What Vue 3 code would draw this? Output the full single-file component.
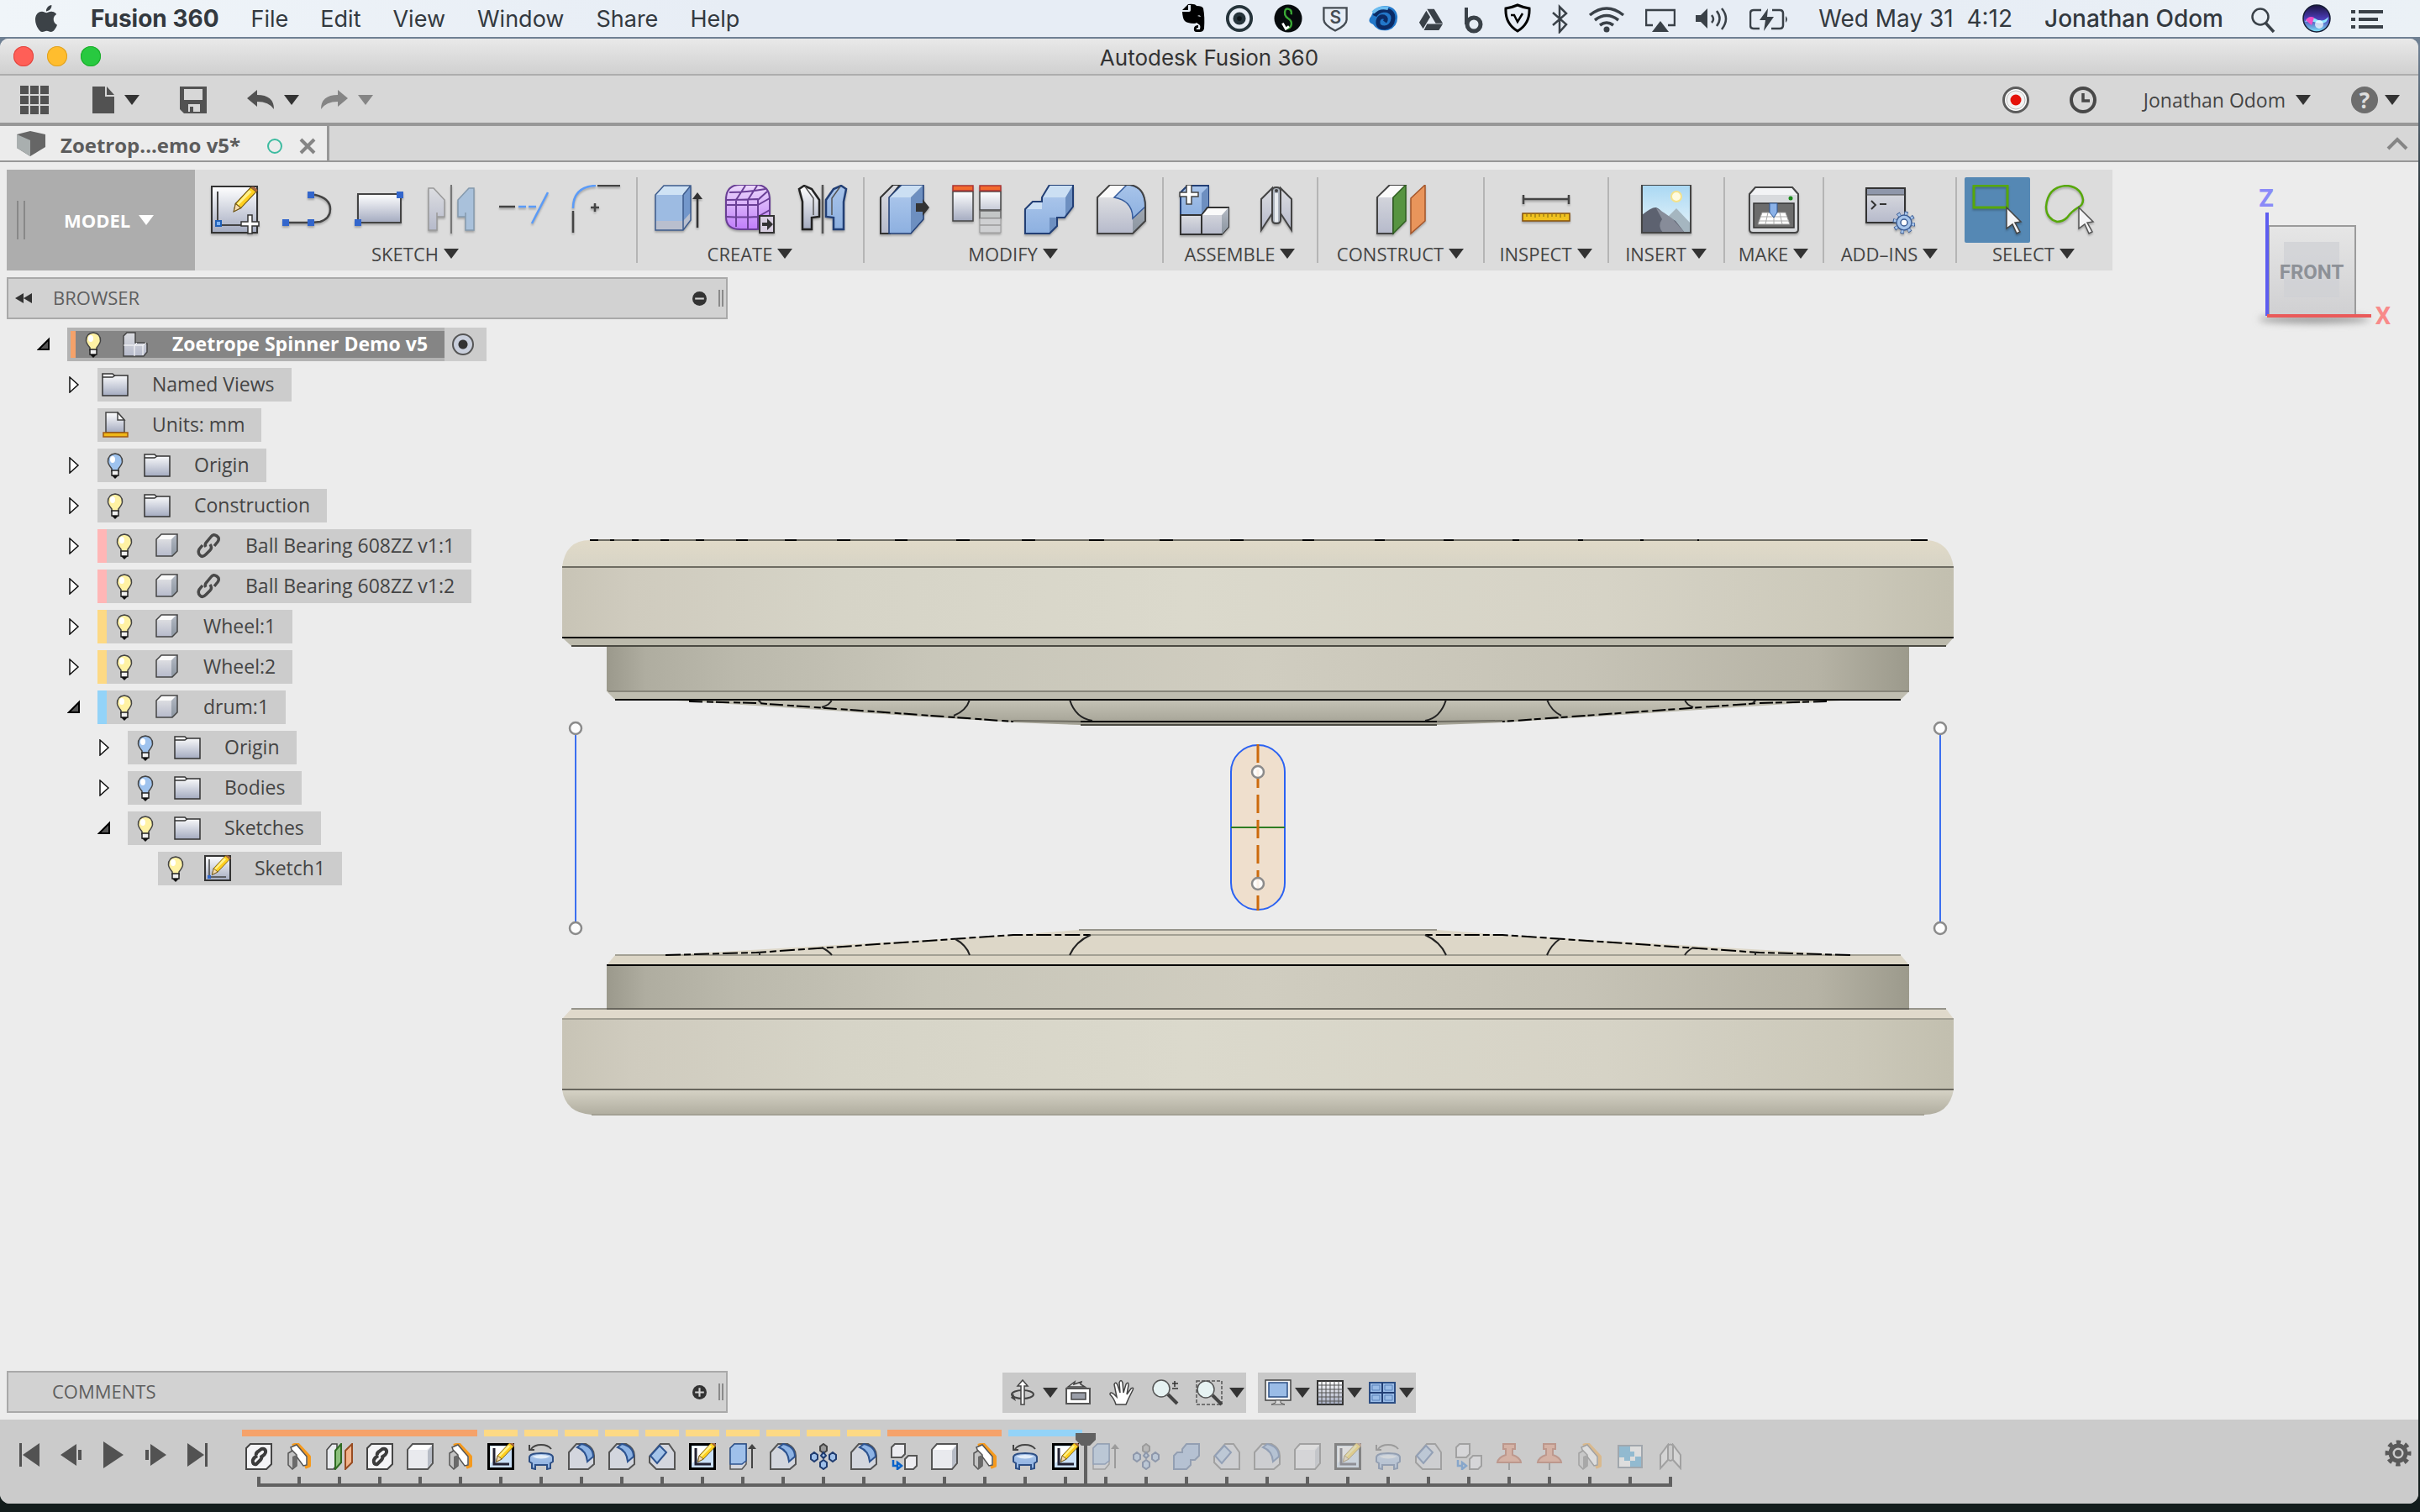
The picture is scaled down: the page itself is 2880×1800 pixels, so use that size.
<template>
  <div class="desktop">
    <!-- shared icon shapes -->
    <svg class="sprite" aria-hidden="true">
      <defs>
        <linearGradient id="grey" x1="0" y1="0" x2="0" y2="1">
          <stop offset="0" stop-color="#ffffff" />
          <stop offset="1" stop-color="#a4abc0" />
        </linearGradient>
        <linearGradient id="face" x1="0" y1="0" x2="0" y2="1">
          <stop offset="0" stop-color="#dcdde1" />
          <stop offset="1" stop-color="#b6bacb" />
        </linearGradient>
        <linearGradient id="side" x1="0" y1="0" x2="0" y2="1">
          <stop offset="0" stop-color="#b4bac4" />
          <stop offset="1" stop-color="#8a949f" />
        </linearGradient>
        <linearGradient id="blue" x1="0" y1="0" x2="0" y2="1">
          <stop offset="0" stop-color="#a8c4ea" />
          <stop offset="1" stop-color="#8db0e0" />
        </linearGradient>
        <linearGradient id="sky" x1="0" y1="0" x2="0" y2="1">
          <stop offset="0" stop-color="#a9d8f3" />
          <stop offset="1" stop-color="#e8f4fa" />
        </linearGradient>
        <linearGradient id="purple" x1="0" y1="0" x2="0" y2="1">
          <stop offset="0" stop-color="#ecd9fb" />
          <stop offset="1" stop-color="#c07dfa" />
        </linearGradient>
        <linearGradient id="siri" x1="0" y1="0" x2="0" y2="1">
          <stop offset="0" stop-color="#1b1440" />
          <stop offset="0.5" stop-color="#4a3bb5" />
          <stop offset="1" stop-color="#7de4f7" />
        </linearGradient>
      </defs>

      <symbol id="caret" viewBox="0 0 18 12"><path d="M0 0H18L9 12z" fill="currentColor" /></symbol>

      <!-- menu bar -->
      <symbol id="apple" viewBox="2 0 20 24">
        <path fill="#3c4247" d="M12.152 6.896c-.948 0-2.415-1.078-3.96-1.04-2.04.027-3.91 1.183-4.961 3.014-2.117 3.675-.546 9.103 1.519 12.09 1.013 1.454 2.208 3.09 3.792 3.039 1.52-.065 2.09-.987 3.935-.987 1.831 0 2.35.987 3.96.948 1.637-.026 2.676-1.48 3.676-2.948 1.156-1.688 1.636-3.325 1.662-3.415-.039-.013-3.182-1.221-3.22-4.857-.026-3.04 2.48-4.494 2.597-4.559-1.429-2.09-3.623-2.324-4.39-2.376-2-.156-3.675 1.09-4.61 1.09zM15.53 3.83c.843-1.012 1.4-2.427 1.245-3.83-1.207.052-2.662.805-3.532 1.818-.78.896-1.454 2.338-1.273 3.714 1.338.104 2.715-.688 3.559-1.701" />
      </symbol>
      <symbol id="evernote" viewBox="0 0 28 36">
        <path fill="#000" d="M8 2v6H1L8 1q8-1 10 2 7 0 8 3 2 10 1 24-1 4-5 4h-4q-4 0-3-5 1-3 5-3v3q-3 0-2 2h4q1-3 0-5l-4-3q-1 1-3 1-4 0-7-1-5-1-6-6-1-4-1-7h8q2 0 2-2V2z" />
        <path d="M19 15q3-2 4 1z" fill="#e9eff5" />
      </symbol>
      <symbol id="target" viewBox="0 0 36 36">
        <circle cx="18" cy="18" r="15" fill="none" stroke="#26343b" stroke-width="4" />
        <circle cx="18" cy="18" r="8" fill="#26343b" />
        <circle cx="18" cy="18" r="3" fill="#0d1418" />
      </symbol>
      <symbol id="snagit" viewBox="0 0 36 36">
        <circle cx="18" cy="18" r="17.500" fill="#060a0c" />
        <path d="M22 13q1-6-4-7t-4 7q1 3 4 5 5 3 4 8t-7 5" fill="none" stroke="#3aa935" stroke-width="2.500" />
        <path d="M11 24l4 7 4-3" fill="none" stroke="#fff" stroke-width="3" />
      </symbol>
      <symbol id="shield-s" viewBox="0 0 32 36">
        <path d="M1.500 4.500h29v15q0 7-14.500 14Q1.500 26 1.500 19.500z" fill="none" stroke="#454c53" stroke-width="2.500" />
      </symbol>
      <symbol id="swirl" viewBox="0 0 36 36">
        <path d="M4 15q3-11 15-12 14 0 16 12 1 13-11 17-12 2-18-7-8-3-2-10z" fill="#2277c9" />
        <path d="M8 15q3-6 11-7 11 0 11 10-1 10-10 11-9 0-8-8 1-6 7-5 4 2 1 6" fill="none" stroke="#0b2b66" stroke-width="5" />
        <path d="M6 11q7-8 18-5" fill="none" stroke="#6bbcf0" stroke-width="4" />
      </symbol>
      <symbol id="drive" viewBox="0 0 32 36">
        <path d="M11 6h9l11 18h-9zM10 8l5 8L6 31l-5-8zM11 25h20l-5 8H7z" fill="#3a4148" />
      </symbol>
      <symbol id="beats" viewBox="0 0 24 36">
        <path d="M3 5v20" stroke="#3a4148" stroke-width="4" />
        <circle cx="12" cy="25" r="8" fill="none" stroke="#3a4148" stroke-width="5" />
      </symbol>
      <symbol id="shield-v" viewBox="0 0 32 36">
        <path d="M16 2q7 3 14 4 1 18-14 27Q1 24 2 6q7-1 14-4z" fill="none" stroke="#000" stroke-width="3" />
        <path d="M8 14h4l4 8 6-10" fill="none" stroke="#000" stroke-width="2.500" />
      </symbol>
      <symbol id="bluetooth" viewBox="0 0 20 36">
        <path d="M2 11l16 14-8 9V4l8 8L2 26" fill="none" stroke="#3a4148" stroke-width="2.500" />
      </symbol>
      <symbol id="wifi" viewBox="0 0 44 36">
        <path d="M2 14q20-16 40 0M8 20q14-11 28 0M14 26q8-6 16 0" fill="none" stroke="#3a4148" stroke-width="3.500" />
        <circle cx="22" cy="31" r="3.500" fill="#3a4148" />
      </symbol>
      <symbol id="airplay" viewBox="0 0 36 36">
        <path d="M9 26H1V8h34v18h-8" fill="none" stroke="#3a4148" stroke-width="2.500" />
        <path d="M18 21l10 13H8z" fill="#3a4148" />
      </symbol>
      <symbol id="volume" viewBox="0 0 40 36">
        <path d="M0 14h6l8-8v24l-8-8H0z" fill="#3a4148" />
        <path d="M19 14q4 5 0 9M25 9q7 9 0 18M31 6q10 12 0 25" fill="none" stroke="#3a4148" stroke-width="2.500" />
      </symbol>
      <symbol id="battery" viewBox="0 0 46 36">
        <path d="M14 8H5q-4 0-4 4v14q0 4 4 4h7M27 8h9q4 0 4 4v14q0 4-4 4H26" fill="none" stroke="#3a4148" stroke-width="2.500" />
        <path d="M22 6l-10 14h7l-2 13 12-17h-8z" fill="#3a4148" />
        <path d="M43 15q4 4 0 8z" fill="#3a4148" />
      </symbol>
      <symbol id="search" viewBox="0 0 30 36">
        <circle cx="12" cy="16" r="9.500" fill="none" stroke="#3a4148" stroke-width="2.500" />
        <path d="M18 23l10 11" stroke="#3a4148" stroke-width="3.500" />
      </symbol>
      <symbol id="siri-orb" viewBox="0 0 34 36">
        <circle cx="17" cy="18" r="16" fill="url(#siri)" stroke="#141b33" stroke-width="1.500" />
        <path d="M3 22q5-8 12-4 9 6 16-2-1 10-14 7-8-3-14-1z" fill="#8fe9ff" />
        <path d="M4 20q4-6 10-3l-3 9z" fill="#f04fc5" />
        <circle cx="20" cy="25" r="5" fill="#fff" opacity="0.700" />
      </symbol>
      <symbol id="list" viewBox="0 0 38 36">
        <path d="M0 10h5M9 10h29M0 19h5M9 19h23M0 28h5M9 28h29" stroke="#3a4148" stroke-width="4" />
      </symbol>

      <!-- quick access bar -->
      <symbol id="grid9" viewBox="0 0 34 34">
        <path fill="#525252" d="M0 0h10v10H0zM12 0h10v10H12zM24 0h10v10H24zM0 12h10v10H0zM12 12h10v10H12zM24 12h10v10H24zM0 24h10v10H0zM12 24h10v10H12zM24 24h10v10H24z" />
      </symbol>
      <symbol id="file" viewBox="0 0 26 32"><path fill="#525252" d="M0 0h15v12h11v20H0zM17 0l9 10h-9z" /></symbol>
      <symbol id="save" viewBox="0 0 32 32">
        <path fill="#525252" fill-rule="evenodd" d="M0 0h32v32H5l-5-5zM5 3v13h22V3zM10 21v9h14v-9z" />
        <path fill="#525252" d="M12 24h4v6h-4z" />
      </symbol>
      <symbol id="undo" viewBox="0 0 32 24">
        <path fill="currentColor" d="M0 10L12 0v6q20 0 20 17-6-9-20-9v6z" />
      </symbol>
      <symbol id="redo" viewBox="0 0 32 24">
        <path fill="currentColor" d="M32 10L20 0v6Q0 6 0 23q6-9 20-9v6z" />
      </symbol>
      <symbol id="record" viewBox="0 0 32 32">
        <circle cx="16" cy="16" r="14.500" fill="#fff" stroke="#5c5c5c" stroke-width="3" />
        <circle cx="16" cy="16" r="11" fill="#f2f2f2" stroke="#bbb" />
        <circle cx="16" cy="16" r="6.500" fill="#e5120a" />
      </symbol>
      <symbol id="clock" viewBox="0 0 32 32">
        <circle cx="16" cy="16" r="14" fill="none" stroke="#484848" stroke-width="4" />
        <path d="M16 8v9h8" fill="none" stroke="#484848" stroke-width="3.500" />
      </symbol>
      <symbol id="cube-tab" viewBox="0 0 34 30">
        <path d="M0 4L16 0l18 4v15L16 30 0 20z" fill="#666" />
        <path d="M0 4l16 7v19L0 20z" fill="#a9afaf" />
      </symbol>

      <!-- ribbon -->
      <symbol id="pencil" viewBox="0 0 30 30">
        <path d="M22 1l6 5L11 24l-8 4 2-9z" fill="#ffcf1f" stroke="#6d5313" />
        <path d="M20 4l3 2L8 21l-2-1z" fill="#fff18a" />
        <path d="M5 19l6 5-8 4z" fill="#f6dcae" stroke="#6d5313" />
        <path d="M22 1q3-2 6 1t0 4z" fill="#a5673f" />
      </symbol>
      <symbol id="r-sketch" viewBox="0 0 60 60">
        <path d="M3 2h54v55H3z" fill="url(#grey)" stroke="#333" stroke-width="2" />
        <path d="M10 8v40h28" fill="none" stroke="#444" stroke-width="2" />
        <path d="M8 43h6v6H8z" fill="#7db3f5" stroke="#2060b8" stroke-width="2" />
        <use href="#pencil" x="26" y="2" width="32" height="32" />
        <path d="M46 36h5v8h8v5h-8v9h-5v-9h-8v-5h8z" fill="#fff" stroke="#333" stroke-width="1.500" />
      </symbol>
      <symbol id="r-line" viewBox="0 0 60 60">
        <path d="M5 45h28M34 12h6q18 4 18 17 0 11-12 15l-10 1" fill="none" stroke="#444" stroke-width="2.500" />
        <path d="M1 41h8v8H1zM31 41h8v8h-8zM31 8h8v8h-8z" fill="#3366cc" />
      </symbol>
      <symbol id="r-rect" viewBox="0 0 60 60">
        <path d="M5 11h51v34H5z" fill="url(#grey)" stroke="#444" stroke-width="2" />
        <path d="M1 41h8v8H1zM51 8h8v8h-8z" fill="#3366cc" />
      </symbol>
      <symbol id="r-mirror" viewBox="0 0 60 60">
        <path d="M30 0v58" stroke="#777" stroke-width="2" />
        <path d="M3 4h6l13 14v20h-9v-5 21H3z" fill="url(#face)" stroke="#999" stroke-width="1.500" />
        <path d="M57 4h-6L38 18v20h9v-5 21h10z" fill="#a9c1db" stroke="#8499ad" stroke-width="1.500" />
      </symbol>
      <symbol id="r-trim" viewBox="0 0 60 60">
        <path d="M1 26h19" stroke="#444" stroke-width="2.500" />
        <path d="M24 26h9M36 26h9M59 9L40 46" stroke="#5b9bf7" stroke-width="2.500" />
      </symbol>
      <symbol id="r-fillet" viewBox="0 0 60 60">
        <path d="M3 28Q3 2 30 1" fill="none" stroke="#5b9bf7" stroke-width="2.500" />
        <path d="M32 1h27M3 31v26M24 27h10M29 22v10" stroke="#444" stroke-width="2.500" />
      </symbol>
      <symbol id="r-extrude" viewBox="0 0 60 60">
        <path d="M3 12L13 1h32v40l-9 13H3z" fill="#7397cb" />
        <path d="M3 12L13 1h32l-9 11z" fill="#cfe2f4" />
        <path d="M3 12h33v31H3z" fill="#9dbbe2" />
        <path d="M3 43h33v11H3zM36 54V43l9-10v9z" fill="#b9bfce" />
        <path d="M3 12L13 1h32v41l-9 12H3zM36 12v42M36 12l9-11" fill="none" stroke="#3d5b8c" stroke-width="1.500" />
        <path d="M53 51V14" stroke="#333" stroke-width="2.500" />
        <path d="M53 9l6 8H47z" fill="#333" />
      </symbol>
      <symbol id="r-form" viewBox="0 0 60 60">
        <path d="M1 18Q1 0 18 0h18q17 0 17 18v18q0 17-17 17H18Q1 53 1 38z" fill="url(#purple)" stroke="#6a3f96" stroke-width="2" />
        <path d="M1 24q20 0 38 0M1 38q20 1 38 0M13 50V18L24 1M27 53V18L38 1M39 53V18L50 8M1 18q18 0 38-1M5 9q20 0 43-4M39 38l14-8M39 24l14-8" fill="none" stroke="#6a3f96" stroke-width="2" />
        <path d="M41 37h17v20H41z" fill="#d8cfe0" stroke="#333" stroke-width="2" />
        <path d="M44 45h6v-5l7 7-7 7v-5h-6z" fill="#333" />
      </symbol>
      <symbol id="r-split" viewBox="0 0 60 60">
        <path d="M30 0v58" stroke="#555" stroke-width="2.500" />
        <path d="M2 5l6-4 9 4 9 13v20l-9 1v14H6V20z" fill="url(#grey)" stroke="#222" stroke-width="2.500" />
        <path d="M58 5l-6-4-9 4-9 13v20l9 1v14h12V20z" fill="url(#blue)" stroke="#223f75" stroke-width="2.500" />
        <path d="M9 2l10 14v20M51 2L41 16v20" fill="none" stroke="#555" stroke-width="1.500" />
      </symbol>
      <symbol id="r-press" viewBox="0 0 60 60">
        <path d="M1 15L16 0h8L12 15v43H1z" fill="url(#face)" stroke="#333" stroke-width="2" />
        <path d="M11 15h26v43H11z" fill="url(#blue)" />
        <path d="M11 15L26 0h26L37 15z" fill="#cbdff3" />
        <path d="M37 15L52 0v41L37 58z" fill="#6d8fc0" />
        <path d="M11 15L26 0h26v41L37 58H11z" fill="none" stroke="#223f75" stroke-width="1.500" />
        <path d="M43 22h8v-5l8 10-8 10v-5h-8z" fill="#333" />
      </symbol>
      <symbol id="r-fillpat" viewBox="0 0 60 60">
        <path d="M1 8h24v35H1zM33 8h25v22H33z" fill="url(#grey)" stroke="#444" stroke-width="1.500" />
        <path d="M33 31h25v9H33z" fill="#c3c6c6" stroke="#666" stroke-width="1.500" />
        <path d="M33 40h25v8H33zM33 48h25v9H33z" fill="#cfd0d2" stroke="#999" />
        <path d="M1 1h24v6H1zM33 1h25v6H33z" fill="#f26a2e" stroke="#a33" stroke-width="1.500" />
      </symbol>
      <symbol id="r-combine" viewBox="0 0 60 60">
        <path d="M1 29l9-9h11V15L30 0h28v26L48 39h-9v10l-9 9H1z" fill="#6d8fc0" />
        <path d="M1 29h20V15h28v24H30v19H1z" fill="url(#blue)" />
        <path d="M1 29l9-9h11v9zM21 15L30 0h28l-9 15z" fill="#cbdff3" />
        <path d="M1 29l9-9h11V15L30 0h28v26L48 39h-9v10l-9 9H1z" fill="none" stroke="#223f75" stroke-width="2" />
      </symbol>
      <symbol id="r-round" viewBox="0 0 60 60">
        <path d="M1 15L16 0h24q18 3 18 26v17L43 58H1z" fill="url(#side)" />
        <path d="M1 15h20q22 2 22 26v17H1z" fill="url(#face)" />
        <path d="M1 15L16 0h20L21 15z" fill="#fafafa" />
        <path d="M21 15L36 0q22 1 22 26L43 40q0-21-22-25z" fill="url(#blue)" stroke="#355b9b" stroke-width="1.500" />
        <path d="M1 15L16 0h24q18 3 18 26v17L43 58H1z" fill="none" stroke="#444" stroke-width="2" />
      </symbol>
      <symbol id="r-component" viewBox="0 0 60 60">
        <path d="M2 9l8-8h25v26L27 36H2z" fill="url(#blue)" stroke="#223f75" stroke-width="2" />
        <path d="M27 35V10l8-8v26z" fill="#6d8fc0" />
        <path d="M2 36h25v23H2z" fill="url(#face)" stroke="#333" stroke-width="2" />
        <path d="M27 36l7-9h25v23l-8 9H27z" fill="url(#face)" stroke="#333" stroke-width="2" />
        <path d="M51 36l8-9v23l-8 9z" fill="url(#side)" />
        <path d="M28 36l7-8h23l-7 8z" fill="#fafafa" />
        <path d="M9 0h6v9h8v5h-8v9H9v-9H1V9h8z" fill="#fff" stroke="#444" stroke-width="1.500" />
      </symbol>
      <symbol id="r-joint" viewBox="0 0 60 60">
        <path d="M12 17L25 4v30L12 54zM48 17L35 4v30l13 20z" fill="url(#face)" stroke="#444" stroke-width="2" />
        <path d="M25 7q0-4 5-4t5 4v35q0 4-5 4t-5-4z" fill="#aeb5bf" stroke="#444" stroke-width="2" />
        <path d="M28 10h4v34h-4z" fill="#e9ecef" />
        <circle cx="30" cy="7" r="2" fill="#444" />
      </symbol>
      <symbol id="r-plane" viewBox="0 0 60 60">
        <path d="M2 15L17 0h19L21 15v43H2z" fill="url(#face)" stroke="#444" stroke-width="2" />
        <path d="M3 15L18 1h17L21 15z" fill="#fafafa" />
        <path d="M21 15L36 0v43L21 58z" fill="#579441" stroke="#2f5f20" stroke-width="1.500" />
        <path d="M42 16L59 0v43L42 58z" fill="#e9955b" stroke="#a4552a" stroke-width="1.500" />
      </symbol>
      <symbol id="r-measure" viewBox="0 0 60 60">
        <path d="M3 12v11M57 12v11M3 17h54" stroke="#444" stroke-width="2.500" />
        <path d="M2 34h56v9H2z" fill="#f0c21f" stroke="#85500d" stroke-width="1.500" />
        <path d="M7 35v3M12 35v3M17 35v4M22 35v3M27 35v3M32 35v4M37 35v3M42 35v3M47 35v4M52 35v3" stroke="#7d6410" />
      </symbol>
      <symbol id="r-image" viewBox="0 0 60 60">
        <path d="M1 0h58v57H1z" fill="url(#sky)" />
        <circle cx="42" cy="14" r="6" fill="#fffbe0" stroke="#f5e28a" stroke-width="2" />
        <path d="M30 40l12-12 17 18v11H30z" fill="#a5b6c0" />
        <path d="M1 36q12-10 17-9 5 2 9 8l14 8 11 14H1z" fill="#5d6270" />
        <path d="M18 28q5 9 7 13-6 8 1 16h26L37 40 27 33z" fill="#878c99" />
        <path d="M1 0h58v57H1z" fill="none" stroke="#444" stroke-width="2" />
      </symbol>
      <symbol id="r-print" viewBox="0 0 60 60">
        <path d="M8 3h44l7 8v42q0 4-4 4H5q-4 0-4-4V11z" fill="#d8dadd" stroke="#444" stroke-width="2" />
        <path d="M9 4h42l7 8H2z" fill="#f2f3f5" />
        <path d="M6 22h48v29H6z" fill="#6c6c6c" stroke="#333" stroke-width="1.500" />
        <path d="M16 33h28l5 14H11z" fill="#fff" stroke="#999" />
        <path d="M14 38h32M12 43h36M23 33l-3 14M30 33v14M37 33l3 14" stroke="#aaa" />
        <path d="M25 22h9v11l-4 6-5-6z" fill="#8bb2e8" stroke="#2f5792" />
        <circle cx="50" cy="16" r="2.500" fill="#1a8a1a" />
      </symbol>
      <symbol id="r-script" viewBox="0 0 60 60">
        <path d="M2 4h46v41H2z" fill="url(#face)" stroke="#333" stroke-width="2" />
        <path d="M3 5h44v7H3z" fill="#8f97aa" />
        <path d="M2 12h46" stroke="#444" />
        <path d="M8 19l5 5-5 5M18 23h8" fill="none" stroke="#333" stroke-width="2" />
        <circle cx="47" cy="45" r="11" fill="none" stroke="#3c5d94" stroke-width="5" stroke-dasharray="4 4.640" />
        <circle cx="47" cy="45" r="9" fill="#a6c4ea" stroke="#3c5d94" stroke-width="1.500" />
        <circle cx="47" cy="45" r="11" fill="none" stroke="#a6c4ea" stroke-width="3" stroke-dasharray="3 5.640" stroke-dashoffset="-0.500" />
        <circle cx="47" cy="45" r="4" fill="#fff" stroke="#3c5d94" stroke-width="1.500" />
      </symbol>
      <symbol id="r-select" viewBox="0 0 60 60">
        <path d="M2 1h40v26H2z" fill="none" stroke="#57a80b" stroke-width="3" />
        <path d="M41 27l17 17-7 1 6 11-4 2-5-11-7 5z" fill="#f4f4f6" stroke="#444" stroke-width="1.500" />
      </symbol>
      <symbol id="r-lasso" viewBox="0 0 60 60">
        <path d="M40 27q-8 5-13 12-5 5-12 5Q2 40 2 26 4 2 27 1q17 2 19 17 0 6-6 9z" fill="none" stroke="#57a80b" stroke-width="2.500" />
        <path d="M41 27l17 17-7 1 6 11-4 2-5-11-7 5z" fill="#f4f4f6" stroke="#555" stroke-width="1.500" />
      </symbol>

      <!-- browser tree, 32px -->
      <symbol id="t-open" viewBox="0 0 16 16"><path d="M14 2v12H2z" fill="#555" stroke="#000" stroke-width="2" /></symbol>
      <symbol id="t-closed" viewBox="0 0 16 20"><path d="M3 1l10 9-10 9z" fill="#fff" stroke="#111" stroke-width="1.500" /></symbol>
      <symbol id="t-bulb" viewBox="0 0 32 32">
        <path d="M16 2q9 1 8.500 10Q24 15 20 20v3h-8v-3Q8 15 7.500 12 7 3 16 2z" fill="#fff2a4" stroke="#444" stroke-width="1.500" />
        <path d="M12 22h8v6h-8z" fill="#f0f0f0" stroke="#222" stroke-width="1.500" />
        <path d="M12 28h8l-4 4z" fill="#111" />
        <ellipse cx="13" cy="9" rx="3" ry="4" fill="#fff" />
      </symbol>
      <symbol id="t-bulb-off" viewBox="0 0 32 32">
        <path d="M16 2q9 1 8.500 10Q24 15 20 20v3h-8v-3Q8 15 7.500 12 7 3 16 2z" fill="#9fc3ee" stroke="#444" stroke-width="1.500" />
        <path d="M12 22h8v6h-8z" fill="#f0f0f0" stroke="#222" stroke-width="1.500" />
        <path d="M12 28h8l-4 4z" fill="#111" />
        <ellipse cx="13" cy="9" rx="3" ry="4" fill="#fff" />
      </symbol>
      <symbol id="t-folder" viewBox="0 0 32 32">
        <path d="M1 3h12l2 2h16v24H1z" fill="url(#grey)" stroke="#333" stroke-width="1.500" />
        <path d="M1 7h12l3-2" fill="none" stroke="#333" stroke-width="1.500" />
      </symbol>
      <symbol id="t-units" viewBox="0 0 32 32">
        <path d="M5 1h14l8 9v15H5z" fill="url(#grey)" stroke="#444" stroke-width="1.500" />
        <path d="M19 1v9h8z" fill="#fff" stroke="#444" stroke-width="1.500" />
        <path d="M2 25h29v5H2z" fill="#f0b818" stroke="#a05a10" stroke-width="1.500" />
      </symbol>
      <symbol id="t-box" viewBox="0 0 32 32">
        <path d="M4 8l6-6h19v20l-6 6H4z" fill="url(#side)" />
        <path d="M4 8h18v20H4z" fill="url(#face)" />
        <path d="M4 8l6-6h18l-6 6z" fill="#fafafa" />
        <path d="M4 8l6-6h19v20l-6 6H4z" fill="none" stroke="#444" stroke-width="1.500" />
      </symbol>
      <symbol id="t-root" viewBox="0 0 32 32">
        <path d="M2 6l4-4h10v12h10l4 1v10l-4 5H2z" fill="url(#face)" stroke="#444" stroke-width="1.500" />
        <path d="M2 17h12M15 30V17l3-3M15 17h10l4-3M25 17v12" fill="none" stroke="#fff" />
      </symbol>
      <symbol id="t-link" viewBox="0 0 32 32">
        <path d="M13 17q-2-3 1-6l5-6q3-4 7-1t1 7l-4 5M18 14q3 4 0 7l-5 5q-4 4-7 1t-1-7l4-5" fill="none" stroke="#484848" stroke-width="3.500" />
      </symbol>
      <symbol id="t-sketch" viewBox="0 0 32 32">
        <path d="M1 1h30v29H1z" fill="url(#grey)" stroke="#333" stroke-width="2" />
        <path d="M6 5v21h20" fill="none" stroke="#444" stroke-width="1.500" />
        <path d="M4 24h4v4H4z" fill="#2e66c9" />
        <use href="#pencil" x="7" y="0" width="25" height="25" />
      </symbol>

      <!-- timeline, 32px -->
      <symbol id="l-link" viewBox="0 0 32 32">
        <path d="M1 6l5-5h25v24l-6 6H1z" fill="#f4f4f6" stroke="#444" stroke-width="2" />
        <path d="M13 15q-1-3 2-5l4-3q4-1 5 2t-3 6l-3 2M19 15q1 3-1 5l-5 5q-3 1-4-2t2-6l3-2" fill="none" stroke="#3c3c3c" stroke-width="4" />
      </symbol>
      <symbol id="l-joint" viewBox="0 0 32 32">
        <path d="M8 3l6-2 14 15v11l-5 2" fill="none" stroke="#f59a1e" stroke-width="4" stroke-linejoin="round" />
        <path d="M6 5l7-3 12 14v10l-4 1-8-11-4-3z" fill="#fff" stroke="#555" stroke-width="1.500" />
        <path d="M3 12l5-3 5 5v13l-5 4-5-5z" fill="#c4c4c4" stroke="#555" stroke-width="1.500" />
        <path d="M8 16l5-2v13l-5 4z" fill="#6a6a6a" />
      </symbol>
      <symbol id="l-plane" viewBox="0 0 32 32">
        <path d="M1 8l6-7h6v24l-4 6H1z" fill="#e8eaee" stroke="#444" stroke-width="1.500" />
        <path d="M11 9l7-8v22l-7 8z" fill="#8cc07c" stroke="#2f6b22" stroke-width="2" />
        <path d="M23 9l8-8v22l-8 8z" fill="#f2b48b" stroke="#984c22" stroke-width="2" />
      </symbol>
      <symbol id="l-box" viewBox="0 0 32 32">
        <path d="M1 8l6-7h24v23l-6 7H1z" fill="#e9eaee" stroke="#555" stroke-width="2" />
        <path d="M2 8l6-6h22l-6 6z" fill="#fff" />
        <path d="M25 9l5-6v20l-5 6z" fill="#b7bcc6" />
      </symbol>
      <symbol id="l-sketch" viewBox="0 0 32 32">
        <path d="M1.500 1.500h29v29h-29z" fill="#c9dff6" stroke="#000" stroke-width="3" />
        <path d="M4 4h20L4 24z" fill="#fff" />
        <path d="M8 6v19h18" fill="none" stroke="#223" stroke-width="3" />
        <use href="#pencil" x="8" y="-1" width="25" height="25" />
      </symbol>
      <symbol id="l-revolve" viewBox="0 0 32 32">
        <path d="M4 7q4-5 12-5t12 5" fill="none" stroke="#444" stroke-width="2" />
        <path d="M2 2v6h6" fill="none" stroke="#444" stroke-width="2" />
        <path d="M2 17q0-5 14-5t14 5v5l-3 2v6l-4 1v-5H9v5l-4-1v-6l-3-2z" fill="url(#blue)" stroke="#2d4f85" stroke-width="2" />
        <path d="M5 16q11-4 22 0-11 5-22 0z" fill="#e3eefa" />
      </symbol>
      <symbol id="l-fillet" viewBox="0 0 32 32">
        <path d="M1 11L10 1h11q10 5 10 14v10l-7 6H1z" fill="#d3d6de" stroke="#555" stroke-width="2" />
        <path d="M11 5l5-4q14 3 14 15l-7 6Q22 9 11 5z" fill="#8db3e4" stroke="#2d5390" stroke-width="2" />
      </symbol>
      <symbol id="l-chamfer" viewBox="0 0 32 32">
        <path d="M1 16L14 1h10l7 10v20H9l-8-8z" fill="#d3d6de" stroke="#555" stroke-width="2" />
        <path d="M2 15L13 3l8 8L10 24z" fill="#a4c4ea" stroke="#2d5390" stroke-width="2" />
      </symbol>
      <symbol id="l-extrude" viewBox="0 0 32 32">
        <path d="M1 6l5-5h14v24l-5 6H1z" fill="#d3d6de" stroke="#555" stroke-width="1.500" />
        <path d="M1 6l5-5h14v20l-5 4H1z" fill="#9fc0ea" stroke="#2d5390" stroke-width="1.500" />
        <path d="M27 30V4" stroke="#444" stroke-width="2" />
        <path d="M22 7l5-6 5 6z" fill="#444" />
      </symbol>
      <symbol id="l-pattern" viewBox="0 0 32 32">
        <path d="M16 1l4 3v5l-4 3-4-3V4z" fill="#999" stroke="#444" stroke-width="2" />
        <path d="M5 11l4 3v5l-4 3-4-3v-5zM27 11l4 3v5l-4 3-4-3v-5zM16 20l4 3v5l-4 3-4-3v-5zM16 11l3 4-3 3-3-3z" fill="#9fc0ea" stroke="#1f3c70" stroke-width="2" />
      </symbol>
      <symbol id="l-copy" viewBox="0 0 32 32">
        <path d="M1 5l4-4h12v12l-4 4H1zM17 19l4-4h10v12l-4 4H17z" fill="#ececf0" stroke="#555" stroke-width="2" />
        <path d="M3 20v7h6M8 23l5 4-5 4z" fill="none" stroke="#0a63c9" stroke-width="2.500" />
      </symbol>
      <symbol id="l-combine" viewBox="0 0 32 32">
        <path d="M1 15l4-4h6V7l5-6h15v14l-5 5h-5v6l-5 5H1z" fill="#8fb1df" stroke="#2d4f85" stroke-width="2" />
      </symbol>
      <symbol id="l-pin" viewBox="0 0 32 32">
        <path d="M9 1h14v6h-3v7q9 3 10 9H2q1-6 10-9V7H9z" fill="#e5855f" stroke="#a63b1c" stroke-width="2" />
        <path d="M16 24v8" stroke="#555" stroke-width="2" />
      </symbol>
      <symbol id="l-split" viewBox="0 0 32 32">
        <path d="M2 3h28v26H2z" fill="#fff" stroke="#567" stroke-width="2" />
        <path d="M3 4h13v6h5v6h-5v5H9v-4H3zM16 21h6v-5h7v12H16z" fill="#2a9bdc" />
      </symbol>
      <symbol id="l-asbuilt" viewBox="0 0 32 32">
        <path d="M4 14L13 2v18L4 30zM28 14L19 2v18l9 10z" fill="#e8e8ea" stroke="#555" stroke-width="2" />
        <path d="M13 3q3-3 6 0v16q-3 4-6 0z" fill="#ccc" stroke="#555" stroke-width="2" />
      </symbol>

      <!-- navigation bar, 32px -->
      <symbol id="n-orbit" viewBox="0 0 32 32">
        <ellipse cx="16" cy="18" rx="13" ry="5" fill="none" stroke="#444" stroke-width="2" />
        <path d="M16 1l6 7h-4v22h-4V8h-4z" fill="#fff" stroke="#444" stroke-width="1.500" />
        <path d="M5 17l3 9-6-4z" fill="#444" />
      </symbol>
      <symbol id="n-look" viewBox="0 0 32 32">
        <path d="M2 11h28v18H2z" fill="#fff" stroke="#555" stroke-width="2" />
        <path d="M8 16h17v8H8z" fill="#9a9ea8" stroke="#444" stroke-width="1.500" />
        <path d="M4 9l8-6-1 3 9-3-1 3 5 3z" fill="#ddd" stroke="#444" stroke-width="1.500" />
      </symbol>
      <symbol id="n-pan" viewBox="0 0 32 32">
        <path d="M9 30Q7 23 2 18q0-4 5 0l3 3L7 6q2-4 4 1l3 9-1-12q2-5 4 0l1 12 3-10q3-4 3 1l-2 11 5-7q4-2 2 2l-5 10-3 7z" fill="#fff" stroke="#444" stroke-width="1.500" />
      </symbol>
      <symbol id="n-zoom" viewBox="0 0 32 32">
        <circle cx="11" cy="11" r="10" fill="#e6f2f2" stroke="#555" stroke-width="1.500" />
        <path d="M19 18l11 11" stroke="#444" stroke-width="4" />
        <path d="M24 5h7M27 2v7M24 11h7" stroke="#333" stroke-width="1.500" />
      </symbol>
      <symbol id="n-window" viewBox="0 0 32 32">
        <path d="M1 2h30v28H1z" fill="none" stroke="#555" stroke-width="1.500" stroke-dasharray="4 2" />
        <circle cx="12" cy="12" r="10" fill="#e6f2f2" stroke="#555" stroke-width="1.500" />
        <path d="M20 19l11 11" stroke="#444" stroke-width="4" />
      </symbol>
      <symbol id="n-display" viewBox="0 0 32 32">
        <path d="M1 1h30v24H1z" fill="#f2f4f6" stroke="#444" stroke-width="1.500" />
        <path d="M5 4h22v17H5z" fill="#9abce6" stroke="#2d4f85" stroke-width="1.500" />
        <path d="M13 25h6v3l5 2H8l5-2z" fill="#ddd" stroke="#555" />
      </symbol>
      <symbol id="n-grid" viewBox="0 0 32 32">
        <path d="M1 2h30v28H1z" fill="url(#grey)" stroke="#333" stroke-width="2" />
        <path d="M6 2v28M11 2v28M16 2v28M21 2v28M26 2v28M1 7h30M1 12h30M1 16h30M1 21h30M1 26h30" stroke="#555" />
      </symbol>
      <symbol id="n-views" viewBox="0 0 32 32">
        <path d="M1 4h30v24H1z" fill="#9abce6" stroke="#2d4f85" stroke-width="2" />
        <path d="M16 4v24M1 16h30" stroke="#223f75" stroke-width="2" />
        <path d="M4 7h9v6H4zM19 7h9v6h-9zM4 19h9v6H4zM19 19h9v6h-9z" fill="none" stroke="#5b82bb" />
      </symbol>
    </svg>

    <header class="menubar">
      <nav class="menus" aria-label="Application menu">
        <button aria-label="Apple"><svg class="apple"><use href="#apple" /></svg></button>
        <button v-for="(menu, i) in menus" :key="menu" :class="{ strong: i === 0 }">{{ menu }}</button>
      </nav>
      <div class="status">
        <button v-for="item in statusIcons" :key="item.icon" class="statusicon" :aria-label="item.label">
          <svg :style="{ width: item.width + 'px' }"><use :href="'#' + item.icon" /></svg>
          <span v-if="item.letter" class="letter">{{ item.letter }}</span>
        </button>
        <span class="date">Wed May 31&nbsp; 4:12</span>
        <button class="account">Jonathan Odom</button>
        <button aria-label="Spotlight"><svg class="spot"><use href="#search" /></svg></button>
        <button aria-label="Siri"><svg class="siri"><use href="#siri-orb" /></svg></button>
        <button aria-label="Notification Center"><svg class="notif"><use href="#list" /></svg></button>
      </div>
    </header>

    <div class="window">
      <div class="titlebar">
        <div class="lights">
          <button class="close" aria-label="Close"></button>
          <button class="minimise" aria-label="Minimize"></button>
          <button class="zoom" aria-label="Zoom"></button>
        </div>
        <h1>Autodesk Fusion 360</h1>
      </div>

      <div class="quickbar">
        <button class="panelgrid" aria-label="Data Panel"><svg><use href="#grid9" /></svg></button>
        <button class="combo" aria-label="File">
          <svg class="file"><use href="#file" /></svg><svg class="caret"><use href="#caret" /></svg>
        </button>
        <button aria-label="Save"><svg class="i32"><use href="#save" /></svg></button>
        <div class="history">
          <button class="combo" aria-label="Undo">
            <svg class="arrow"><use href="#undo" /></svg><svg class="caret"><use href="#caret" /></svg>
          </button>
          <button class="combo faded" aria-label="Redo">
            <svg class="arrow"><use href="#redo" /></svg><svg class="caret"><use href="#caret" /></svg>
          </button>
        </div>
        <div class="quickright">
          <button aria-label="Record"><svg class="i32"><use href="#record" /></svg></button>
          <button aria-label="Job status"><svg class="i32"><use href="#clock" /></svg></button>
          <button class="combo user">Jonathan Odom<svg class="caret"><use href="#caret" /></svg></button>
          <button class="combo help" aria-label="Help">
            <span class="question">?</span><svg class="caret"><use href="#caret" /></svg>
          </button>
        </div>
      </div>

      <div class="tabs">
        <div class="tab">
          <svg class="tabcube"><use href="#cube-tab" /></svg>
          <span class="tabname">Zoetrop...emo v5*</span>
          <span class="dot"></span>
          <button aria-label="Close tab">
            <svg class="cross" viewBox="0 0 20 20"><path d="M2 2l16 16M18 2L2 18" stroke="#858585" stroke-width="4" /></svg>
          </button>
        </div>
        <button class="collapse" aria-label="Collapse toolbar">
          <svg viewBox="0 0 26 16"><path d="M2 14L13 3l11 11" fill="none" stroke="#858585" stroke-width="4" /></svg>
        </button>
      </div>

      <main class="canvas">
        <!-- the model, seen from the front -->
        <svg class="model" viewBox="0 193 2878 1497" role="img" aria-label="Zoetrope spinner, front view">
          <defs>
            <linearGradient id="rim">
              <stop offset="0" stop-color="#c8c4b6" />
              <stop offset="0.050" stop-color="#cfcbbe" />
              <stop offset="0.200" stop-color="#d6d4c7" />
              <stop offset="0.450" stop-color="#dbd9cc" />
              <stop offset="0.750" stop-color="#d6d3c6" />
              <stop offset="0.930" stop-color="#cbc8b9" />
              <stop offset="1" stop-color="#c2bfaf" />
            </linearGradient>
            <linearGradient id="hub">
              <stop offset="0" stop-color="#9b998c" />
              <stop offset="0.030" stop-color="#afada0" />
              <stop offset="0.100" stop-color="#bbb9ac" />
              <stop offset="0.250" stop-color="#c8c6b9" />
              <stop offset="0.500" stop-color="#d0cdc0" />
              <stop offset="0.750" stop-color="#c6c3b6" />
              <stop offset="0.930" stop-color="#b6b3a5" />
              <stop offset="1" stop-color="#9c9a8c" />
            </linearGradient>
            <linearGradient id="shoulder" x1="0" y1="0" x2="0" y2="1">
              <stop offset="0" stop-color="#e1dac8" />
              <stop offset="1" stop-color="#d7d4c6" />
            </linearGradient>
            <linearGradient id="underside" x1="0" y1="0" x2="0" y2="1">
              <stop offset="0" stop-color="#d6d3c6" />
              <stop offset="1" stop-color="#b0ad9f" />
            </linearGradient>
            <linearGradient id="cone-low" x1="0" y1="0" x2="0" y2="1">
              <stop offset="0" stop-color="#c5c3b6" />
              <stop offset="1" stop-color="#a3a194" />
            </linearGradient>
          </defs>

          <path d="M669 675Q673 643 702 643H2294Q2320 645 2325 675z" fill="url(#shoulder)" />
          <path d="M669 675H2325V759H669z" fill="url(#rim)" />
          <path d="M669 759H2325L2316 769H680z" fill="#bcbaac" />
          <path d="M722 769H2272V823H722z" fill="url(#hub)" />
          <path d="M722 823H2272L2262 833H732z" fill="#bfbdb0" />
          <path d="M790 833H2206L1790 860 1710 863H1286L1206 860z" fill="url(#cone-low)" />
          <path d="M702 643H2294M669 675H2325" stroke="#6e6c62" stroke-width="2" />
          <path v-for="[x, w] in edgeDashes" :key="x" :d="`M${x} 643h${w}`" stroke="#000" stroke-width="2" />
          <path d="M669 759H2325M732 833H2262M1286 859H1710" stroke="#000" stroke-width="2" />
          <path d="M680 769H2316M1286 863H1710" stroke="#4b4a42" stroke-width="2" />
          <path d="M724 823H2272" stroke="#87857a" stroke-width="2" />
          <path d="M820 835L900 837 1206 859M2174 835L2094 837 1788 859" fill="none" stroke="#000" stroke-width="2" stroke-dasharray="16 5 8 3" />
          <path d="M1206 858L1286 859M1788 858L1710 859" stroke="#6e6c62" stroke-width="2" />
          <path d="M1273 833Q1280 855 1300 858M1721 833Q1714 855 1696 858M1154 833Q1150 846 1135 852M1841 833Q1846 846 1858 852M990 833Q988 839 978 842M2005 833Q2007 839 2015 842M902 833l4 4M2090 833l-4 4" fill="none" stroke="#222" stroke-width="2" />

          <path d="M790 1137L1206 1113 1284 1107H1710L1790 1113 2206 1137z" fill="#ddd7c8" />
          <path d="M732 1137H2262L2272 1149H722z" fill="#dcd6c6" />
          <path d="M722 1149H2272V1201H722z" fill="url(#hub)" />
          <path d="M680 1201H2316L2325 1213H669z" fill="#e0d9cb" />
          <path d="M669 1213H2325V1297H669z" fill="url(#rim)" />
          <path d="M669 1297H2325Q2320 1327 2290 1327H704Q673 1325 669 1297z" fill="url(#underside)" />
          <path d="M1284 1107H1710M680 1201H722M2272 1201H2316" stroke="#96948b" stroke-width="2" />
          <path d="M1290 1113H1704M732 1137H2262M669 1213H2325M704 1327H2290" stroke="#a3a094" stroke-width="2" />
          <path d="M722 1149H2272" stroke="#000" stroke-width="2" />
          <path d="M722 1201H2272M669 1297H2325" stroke="#68665d" stroke-width="2" />
          <path d="M792 1137L900 1134 1206 1113H1300M2202 1137L2094 1134 1788 1113H1696" fill="none" stroke="#000" stroke-width="2" stroke-dasharray="18 4 8 4" />
          <path d="M1273 1137Q1280 1121 1298 1113M1721 1137Q1714 1121 1696 1113M1154 1137Q1150 1125 1137 1118M1841 1137Q1846 1125 1856 1118M990 1137Q986 1132 978 1128M2005 1137Q2008 1132 2015 1128M904 1137v-4M2089 1137v-4" fill="none" stroke="#222" stroke-width="2" />

          <!-- active sketch -->
          <path d="M685 875V1097M2309 875V1097" stroke="#3b6ff0" stroke-width="2" />
          <rect x="1465" y="887" width="64" height="196" rx="32" fill="#efdfcd" stroke="#2b62f2" stroke-width="2" />
          <path d="M1465 985H1529" stroke="#2f7d22" stroke-width="2" />
          <path d="M1497 886V1084" stroke="#cc6a0c" stroke-width="3" stroke-dasharray="22 8" />
          <circle v-for="[x, y] in sketchPoints" :key="`${x}-${y}`" :cx="x" :cy="y" r="7" fill="#fff" fill-opacity="0.900" stroke="#8b8b8b" stroke-width="2.500" />
        </svg>

        <div class="ribbon">
          <button class="workspace">
            <span class="grip"></span>MODEL<svg class="caret"><use href="#caret" /></svg>
          </button>
          <section v-for="group in groups" :key="group.name" class="group" :style="{ width: group.width + 'px' }">
            <div class="tools">
              <button v-for="(tool, i) in group.tools" :key="tool" class="tool" :class="{ active: tool === 'r-select' }" :aria-label="`${group.name} ${i + 1}`">
                <svg><use :href="'#' + tool" /></svg>
              </button>
            </div>
            <button class="grouplabel">{{ group.name }}<svg class="caret"><use href="#caret" /></svg></button>
          </section>
        </div>

        <div class="panel">
          <button aria-label="Collapse browser">
            <svg class="rewind" viewBox="0 0 20 14"><path d="M10 1v12L0 7zM20 1v12L10 7z" fill="#333" /></svg>
          </button>
          <h2>BROWSER</h2>
          <button class="round" aria-label="Hide browser">
            <svg viewBox="0 0 16 16"><circle cx="8" cy="8" r="8" fill="#333" /><path d="M3 8h10" stroke="#d3d3d3" stroke-width="2" /></svg>
          </button>
          <span class="edge"></span>
        </div>

        <ul class="tree">
          <li v-for="(node, i) in tree" :key="i" :style="{ paddingLeft: 34 + node.level * 36 + 'px' }">
            <button v-if="node.state" class="toggle" :aria-label="`Toggle ${node.name}`">
              <svg><use :href="'#t-' + node.state" /></svg>
            </button>
            <span v-else class="toggle"></span>
            <button class="node" :class="{ root: i === 0 }">
              <span v-if="node.stripe" class="stripe" :class="node.stripe"></span>
              <span class="nodeicons">
                <svg v-for="icon in node.icons" :key="icon"><use :href="'#t-' + icon" /></svg>
              </span>
              <span class="nodename">{{ node.name }}</span>
            </button>
            <label v-if="i === 0" class="activate"><input type="radio" name="active" checked aria-label="Activate component" /></label>
          </li>
        </ul>

        <button class="viewcube" aria-label="View cube">
          <svg viewBox="0 0 180 180">
            <defs>
              <filter id="soft" x="-20%" y="-200%" width="140%" height="500%"><feGaussianBlur stdDeviation="4" /></filter>
              <linearGradient id="cubeface" x1="0" y1="0" x2="0" y2="1">
                <stop offset="0" stop-color="#e6e6e6" />
                <stop offset="1" stop-color="#d0d0d2" />
              </linearGradient>
            </defs>
            <ellipse cx="84" cy="160" rx="66" ry="5" fill="#9a9a9a" filter="url(#soft)" />
            <path d="M30 49h103v106H30z" fill="url(#cubeface)" stroke="#9b9b9b" stroke-width="2" />
            <path d="M48 68h66v66H48z" fill="#cfd0d4" opacity="0.700" />
            <text x="81" y="112" text-anchor="middle" font-family="Roboto, sans-serif" font-size="24" font-weight="700" fill="#8d9197">FRONT</text>
            <path d="M28 33v123" stroke="#5d5df0" stroke-width="4" />
            <path d="M28 156h124" stroke="#ea5a5a" stroke-width="4" />
            <text x="27" y="26" text-anchor="middle" font-family="Roboto, sans-serif" font-size="29" font-weight="700" fill="#8a8af8">Z</text>
            <text x="166" y="166" text-anchor="middle" font-family="Roboto, sans-serif" font-size="29" font-weight="700" fill="#f88a8a">X</text>
          </svg>
        </button>

        <div class="bottombar">
          <div class="panel comments">
            <h2>COMMENTS</h2>
            <button class="round" aria-label="Show comments">
              <svg viewBox="0 0 16 16"><circle cx="8" cy="8" r="8" fill="#333" /><path d="M3 8h10M8 3v10" stroke="#d3d3d3" stroke-width="2" /></svg>
            </button>
            <span class="edge"></span>
          </div>
          <div class="navs">
            <div class="nav">
              <button class="combo" aria-label="Orbit"><svg class="i32"><use href="#n-orbit" /></svg><svg class="caret"><use href="#caret" /></svg></button>
              <button class="plain" aria-label="Look at"><svg class="i32"><use href="#n-look" /></svg></button>
              <button class="plain" aria-label="Pan"><svg class="i32"><use href="#n-pan" /></svg></button>
              <button class="plain" aria-label="Zoom"><svg class="i32"><use href="#n-zoom" /></svg></button>
              <button class="combo" aria-label="Zoom window"><svg class="i32"><use href="#n-window" /></svg><svg class="caret"><use href="#caret" /></svg></button>
            </div>
            <div class="nav tight">
              <button class="combo" aria-label="Display settings"><svg class="i32"><use href="#n-display" /></svg><svg class="caret"><use href="#caret" /></svg></button>
              <button class="combo" aria-label="Grid and snaps"><svg class="i32"><use href="#n-grid" /></svg><svg class="caret"><use href="#caret" /></svg></button>
              <button class="combo" aria-label="Viewports"><svg class="i32"><use href="#n-views" /></svg><svg class="caret"><use href="#caret" /></svg></button>
            </div>
          </div>
        </div>
      </main>

      <footer class="timeline">
        <div class="playback">
          <button v-for="item in playback" :key="item.label" :aria-label="item.label">
            <svg viewBox="0 0 26 32"><path :d="item.path" fill="#525252" /></svg>
          </button>
        </div>
        <div class="history-track">
          <div class="segments">
            <span v-for="(seg, i) in segments" :key="i" :class="seg.color" :style="{ width: seg.span * 48 - 8 + 'px' }"></span>
          </div>
          <ol>
            <li v-for="(feature, i) in features" :key="i" :class="{ pending: i > current }">
              <button :aria-label="`${feature} feature`"><svg class="i32"><use :href="'#l-' + feature" /></svg></button>
              <svg v-if="i === current" class="marker" viewBox="0 0 24 60"><path d="M0 0h24v8l-7 7h-3v45h-4V15H7L0 8z" fill="#616161" /></svg>
            </li>
          </ol>
          <div class="track"></div>
        </div>
        <button class="settings" aria-label="Timeline settings">
          <svg viewBox="0 0 32 32">
            <circle cx="16" cy="16" r="13" fill="none" stroke="#5a5a5a" stroke-width="5" stroke-dasharray="5.200 5.010" stroke-dashoffset="2.600" />
            <circle cx="16" cy="16" r="9" fill="none" stroke="#5a5a5a" stroke-width="5" />
            <circle cx="16" cy="16" r="4" fill="#5a5a5a" />
          </svg>
        </button>
      </footer>
    </div>
  </div>
</template>

<script setup>
import { ref } from 'vue';

const menus = ['Fusion 360', 'File', 'Edit', 'View', 'Window', 'Share', 'Help'];

const statusIcons = [
  { icon: 'evernote', label: 'Evernote', width: 28 },
  { icon: 'target', label: 'Recorder', width: 34 },
  { icon: 'snagit', label: 'Snagit', width: 34 },
  { icon: 'shield-s', label: 'Sophos', width: 30, letter: 'S' },
  { icon: 'swirl', label: 'Sync', width: 36 },
  { icon: 'drive', label: 'Google Drive', width: 30 },
  { icon: 'beats', label: 'Audio', width: 24 },
  { icon: 'shield-v', label: 'Security', width: 32 },
  { icon: 'bluetooth', label: 'Bluetooth', width: 20 },
  { icon: 'wifi', label: 'Wi-Fi', width: 44 },
  { icon: 'airplay', label: 'AirPlay', width: 36 },
  { icon: 'volume', label: 'Volume', width: 40 },
  { icon: 'battery', label: 'Battery', width: 46 },
];

const groups = [
  { name: 'SKETCH', width: 527, tools: ['r-sketch', 'r-line', 'r-rect', 'r-mirror', 'r-trim', 'r-fillet'] },
  { name: 'CREATE', width: 270, tools: ['r-extrude', 'r-form', 'r-split'] },
  { name: 'MODIFY', width: 356, tools: ['r-press', 'r-fillpat', 'r-combine', 'r-round'] },
  { name: 'ASSEMBLE', width: 184, tools: ['r-component', 'r-joint'] },
  { name: 'CONSTRUCT', width: 198, tools: ['r-plane'] },
  { name: 'INSPECT', width: 148, tools: ['r-measure'] },
  { name: 'INSERT', width: 138, tools: ['r-image'] },
  { name: 'MAKE', width: 118, tools: ['r-print'] },
  { name: 'ADD–INS', width: 158, tools: ['r-script'] },
  { name: 'SELECT', width: 185, tools: ['r-select', 'r-lasso'] },
];

const tree = [
  { name: 'Zoetrope Spinner Demo v5', level: 0, state: 'open', stripe: 'orange', icons: ['bulb', 'root'] },
  { name: 'Named Views', level: 1, state: 'closed', icons: ['folder'] },
  { name: 'Units: mm', level: 1, icons: ['units'] },
  { name: 'Origin', level: 1, state: 'closed', icons: ['bulb-off', 'folder'] },
  { name: 'Construction', level: 1, state: 'closed', icons: ['bulb', 'folder'] },
  { name: 'Ball Bearing 608ZZ v1:1', level: 1, state: 'closed', stripe: 'pink', icons: ['bulb', 'box', 'link'] },
  { name: 'Ball Bearing 608ZZ v1:2', level: 1, state: 'closed', stripe: 'pink', icons: ['bulb', 'box', 'link'] },
  { name: 'Wheel:1', level: 1, state: 'closed', stripe: 'yellow', icons: ['bulb', 'box'] },
  { name: 'Wheel:2', level: 1, state: 'closed', stripe: 'yellow', icons: ['bulb', 'box'] },
  { name: 'drum:1', level: 1, state: 'open', stripe: 'blue', icons: ['bulb', 'box'] },
  { name: 'Origin', level: 2, state: 'closed', icons: ['bulb-off', 'folder'] },
  { name: 'Bodies', level: 2, state: 'closed', icons: ['bulb-off', 'folder'] },
  { name: 'Sketches', level: 2, state: 'open', icons: ['bulb', 'folder'] },
  { name: 'Sketch1', level: 3, icons: ['bulb', 'sketch'] },
];

// x position and length of the dark facets along the upper rim
const edgeDashes = [
  [702, 10], [726, 5], [752, 8], [786, 10], [828, 10], [876, 14], [934, 14], [996, 16], [1065, 15],
  [1138, 16], [1216, 16], [1296, 18], [1380, 16], [1464, 16], [1550, 14], [1636, 12], [1718, 12],
  [1800, 8], [1878, 6], [1952, 4], [2020, 2], [2274, 20],
];

const sketchPoints = [[685, 867], [685, 1105], [2309, 867], [2309, 1105], [1497, 919], [1497, 1052]];

const playback = [
  { label: 'Go to start', path: 'M1 2h3v28H1zM25 2v28L5 16z' },
  { label: 'Step back', path: 'M19 3v26L0 16zM21 10h4v12h-4z' },
  { label: 'Play', path: 'M1 0v32l24-16z' },
  { label: 'Step forward', path: 'M7 3v26l19-13zM1 10h4v12H1z' },
  { label: 'Go to end', path: 'M22 2h3v28h-3zM1 2v28l20-14z' },
];

const segments = [
  { color: 'orange', span: 6 },
  ...Array.from({ length: 10 }, () => ({ color: 'yellow', span: 1 })),
  { color: 'orange', span: 3 },
  { color: 'blue', span: 2 },
];

const features = [
  'link', 'joint', 'plane', 'link', 'box', 'joint', 'sketch', 'revolve', 'fillet', 'fillet', 'chamfer', 'sketch',
  'extrude', 'fillet', 'pattern', 'fillet', 'copy', 'box', 'joint', 'revolve', 'sketch', 'extrude', 'pattern', 'combine',
  'chamfer', 'fillet', 'box', 'sketch', 'revolve', 'chamfer', 'copy', 'pin', 'pin', 'joint', 'split', 'asbuilt',
];
const current = ref(20);
</script>

<style>
body {
  margin: 0;
  background: #131d1c;
}
</style>

<style scoped>
.desktop {
  display: flex;
  flex-direction: column;
  min-height: 100vh;
  background: linear-gradient(#6f8093 0, #6f8093 60px, #131d1c 300px);
  font-family: 'Open Sans', 'Noto Sans', sans-serif;
  font-size: 22px;
  color: #444;
}
.sprite {
  position: absolute;
  width: 0;
  height: 0;
}
button {
  display: flex;
  align-items: center;
  padding: 0;
  border: 0;
  background: none;
  font: inherit;
  color: inherit;
  white-space: nowrap;
}
svg {
  display: block;
  flex: none;
}
h1,
h2,
ul,
ol {
  margin: 0;
  padding: 0;
  list-style: none;
  font-weight: 400;
}
.i32 {
  width: 32px;
  height: 32px;
}
.caret {
  width: 18px;
  height: 12px;
  color: #333;
}

/* menu bar */
.menubar {
  display: flex;
  justify-content: space-between;
  height: 44px;
  padding: 0 44px 0 40px;
  background: linear-gradient(90deg, #f0f5f9, #e7edf5 30%, #e7edf5 80%, #ebf1f6);
  font-family: Inter, Roboto, sans-serif;
  font-size: 28px;
  color: #33393f;
}
.menus,
.status {
  display: flex;
  align-items: center;
}
.menus {
  gap: 38px;
  font-size: 27px;
}
.apple {
  width: 30px;
  height: 32px;
}
.strong {
  font-size: 28px;
  font-weight: 700;
}
.status {
  gap: 24px;
}
.status svg {
  height: 36px;
}
.statusicon {
  position: relative;
}
.letter {
  position: absolute;
  inset: 0;
  font-size: 21px;
  font-weight: 600;
  line-height: 34px;
  text-align: center;
  color: #454c53;
}
.date {
  margin: 0 14px 0 12px;
}
.account {
  margin-right: 8px;
  font-weight: 500;
}
.spot {
  width: 30px;
}
.siri {
  width: 34px;
  margin: 0 0 0 8px;
}
.notif {
  width: 38px;
}

/* window chrome */
.window {
  flex: 1;
  display: flex;
  flex-direction: column;
  margin: 2px 2px 10px 0;
  border-radius: 10px 10px 12px 12px;
  background: #ececec;
  overflow: hidden;
}
.titlebar {
  display: grid;
  grid-template-columns: 1fr auto 1fr;
  align-items: center;
  height: 42px;
  border-bottom: 2px solid #adadad;
  background: linear-gradient(#e9e9e9, #d0d0d0);
}
.titlebar h1 {
  padding-top: 2px;
  font-family: Inter, Roboto, sans-serif;
  font-size: 26px;
  color: #333;
}
.lights {
  display: flex;
  gap: 16px;
  padding-left: 16px;
}
.lights button {
  width: 24px;
  height: 24px;
  border-radius: 50%;
}
.close {
  background: #ff5f57;
  box-shadow: inset 0 0 0 1px #e0443e;
}
.minimise {
  background: #ffbd2e;
  box-shadow: inset 0 0 0 1px #dea123;
}
.zoom {
  background: #28c940;
  box-shadow: inset 0 0 0 1px #1aab29;
}
.quickbar {
  display: flex;
  align-items: center;
  gap: 48px;
  height: 56px;
  padding: 2px 22px 0 24px;
  box-sizing: border-box;
  background: #d7d7d7;
}
.panelgrid {
  width: 38px;
}
.panelgrid svg {
  width: 34px;
  height: 34px;
}
.combo {
  gap: 12px;
}
.file {
  width: 26px;
  height: 32px;
}
.history {
  display: flex;
  gap: 26px;
  color: #525252;
}
.arrow {
  width: 32px;
  height: 24px;
}
.faded,
.faded .caret {
  color: #858585;
}
.quickright {
  display: flex;
  gap: 48px;
  margin-left: auto;
}
.user {
  padding-left: 8px;
  font-size: 23px;
}
.help {
  gap: 8px;
}
.question {
  width: 32px;
  height: 32px;
  border-radius: 50%;
  background: #6d6d6d;
  font-size: 26px;
  font-weight: 700;
  line-height: 32px;
  text-align: center;
  color: #dedede;
}
.tabs {
  display: flex;
  justify-content: space-between;
  height: 41px;
  border-top: 4px solid #979797;
  border-bottom: 2px solid #979797;
  background: #d7d7d7;
}
.tab {
  display: flex;
  align-items: center;
  padding: 0 13px 0 20px;
  border-right: 3px solid #979797;
  background: #ececec;
}
.tabcube {
  width: 34px;
  height: 30px;
}
.tabname {
  margin: 4px 32px 0 18px;
  font-size: 24px;
  font-weight: 700;
  line-height: 32px;
  color: #5c5c5c;
}
.dot {
  width: 14px;
  height: 14px;
  margin: 6px 20px 0 0;
  border: 2px solid #3dbba0;
  border-radius: 50%;
}
.cross {
  width: 20px;
  height: 20px;
  margin-top: 6px;
}
.collapse {
  padding-right: 12px;
}
.collapse svg {
  width: 26px;
  height: 16px;
}

/* canvas */
.canvas {
  position: relative;
  flex: 1;
  display: flex;
  flex-direction: column;
  align-items: flex-start;
  gap: 8px;
  padding: 9px 8px 8px;
}
.canvas > * {
  position: relative;
}
.canvas > .model {
  position: absolute;
  inset: 0;
  width: 100%;
  height: 100%;
}
.ribbon {
  display: flex;
  height: 120px;
  background: #dcdcdc;
}
.workspace {
  gap: 10px;
  width: 224px;
  background: #adadad;
  font-weight: 700;
  color: #fff;
}
.workspace .caret {
  color: #fff;
}
.grip {
  width: 6px;
  height: 46px;
  margin: 0 36px 0 12px;
  border: solid #888;
  border-width: 0 2px;
}
.group {
  position: relative;
  display: flex;
  flex-direction: column;
  align-items: center;
  box-sizing: border-box;
  padding: 9px 3px 0 0;
}
.group:not(:last-child)::after {
  content: '';
  position: absolute;
  top: 9px;
  right: 0;
  width: 2px;
  height: 102px;
  background: #b5b5b5;
}
.tools {
  display: flex;
  gap: 8px;
}
.tool {
  justify-content: center;
  width: 78px;
  height: 78px;
  border-radius: 2px;
}
.tool svg {
  width: 60px;
  height: 60px;
  overflow: visible;
  filter: drop-shadow(0 2px 1px rgba(0, 0, 0, 0.25));
}
.tool.active {
  background: #5588b4;
}
.grouplabel {
  gap: 6px;
  height: 26px;
}
.panel {
  display: flex;
  align-items: center;
  box-sizing: border-box;
  width: 858px;
  height: 50px;
  padding: 0 3px 0 8px;
  border: 2px solid #a9a9a9;
  background: #d2d2d2;
}
.panel h2 {
  flex: 1;
  margin-left: 25px;
  padding-bottom: 2px;
  font-size: 22px;
  color: #5f5f5f;
}
.panel.comments h2 {
  margin-left: 44px;
}
.rewind {
  width: 20px;
  height: 14px;
}
.round {
  margin-right: 14px;
}
.round svg {
  width: 17px;
  height: 17px;
}
.edge {
  width: 2px;
  height: 20px;
  border: solid #8a8a8a;
  border-width: 0 2px;
}
.tree {
  display: flex;
  flex-direction: column;
  gap: 8px;
  margin: 2px 0 0 -8px;
  font-size: 23px;
}
.tree li {
  display: flex;
  align-items: center;
}
.toggle {
  display: flex;
  justify-content: center;
  width: 36px;
  margin-right: 10px;
}
.toggle svg {
  width: 16px;
  height: 20px;
}
.node {
  align-items: stretch;
  height: 40px;
  padding-right: 20px;
  background: #cccccc;
}
.nodeicons {
  display: flex;
  align-items: center;
  gap: 18px;
  padding: 0 28px 0 5px;
}
.nodeicons svg {
  width: 32px;
  height: 32px;
}
.nodename {
  align-self: center;
  padding-bottom: 2px;
}
.stripe {
  width: 11px;
}
.orange {
  background: #f5a26a;
}
.yellow {
  background: #fdd984;
}
.pink {
  background: #ffb6b6;
}
.blue {
  background: #93d3f8;
}
.root {
  box-sizing: border-box;
  border: solid #b3b3b3;
  border-width: 4px 0 4px 4px;
  background: #858585;
  font-weight: 700;
  color: #fff;
}
.root .stripe {
  width: 6px;
}
.activate {
  display: flex;
  align-items: center;
  justify-content: center;
  width: 50px;
  height: 40px;
  background: #cccccc;
}
.activate input {
  appearance: none;
  width: 26px;
  height: 26px;
  margin: 0 6px 0 0;
  border: 2px solid #555;
  border-radius: 50%;
  background: radial-gradient(circle, #333 0 5px, #c9cfdc 6px 100%);
}
.canvas > .viewcube {
  position: absolute;
  top: 27px;
  right: 28px;
}
.viewcube svg {
  width: 180px;
  height: 180px;
}
.bottombar {
  display: grid;
  grid-template-columns: 1fr auto 1fr;
  align-items: end;
  align-self: stretch;
  margin-top: auto;
}
.navs {
  display: flex;
  gap: 14px;
}
.nav {
  display: flex;
  align-items: center;
  gap: 8px;
  height: 48px;
  padding: 0 2px 0 8px;
  background: #c9c9c9;
}
.nav .combo {
  gap: 8px;
}
.nav.tight .combo {
  gap: 4px;
}
.plain {
  padding-right: 12px;
}

/* timeline */
.timeline {
  display: flex;
  height: 100px;
  background: #cbcbcb;
}
.playback {
  display: flex;
  align-items: center;
  gap: 24px;
  width: 262px;
  height: 84px;
  padding-left: 22px;
}
.playback svg {
  width: 26px;
  height: 32px;
}
.history-track {
  padding-top: 12px;
}
.segments {
  display: flex;
  gap: 8px;
  padding-left: 4px;
}
.segments span {
  height: 8px;
}
.history-track ol {
  display: flex;
  margin-top: 8px;
}
.history-track li {
  position: relative;
  display: flex;
  flex-direction: column;
  align-items: center;
  width: 48px;
}
.history-track li::after {
  content: '';
  width: 4px;
  height: 8px;
  margin-top: 8px;
  background: #616161;
}
.pending button {
  opacity: 0.35;
}
.marker {
  position: absolute;
  top: -12px;
  left: 36px;
  z-index: 1;
  width: 24px;
  height: 60px;
}
.track {
  height: 4px;
  margin: 0 22px;
  background: #616161;
}
.settings {
  height: 80px;
  margin-left: auto;
  padding-right: 8px;
}
.settings svg {
  width: 32px;
  height: 32px;
}
</style>
